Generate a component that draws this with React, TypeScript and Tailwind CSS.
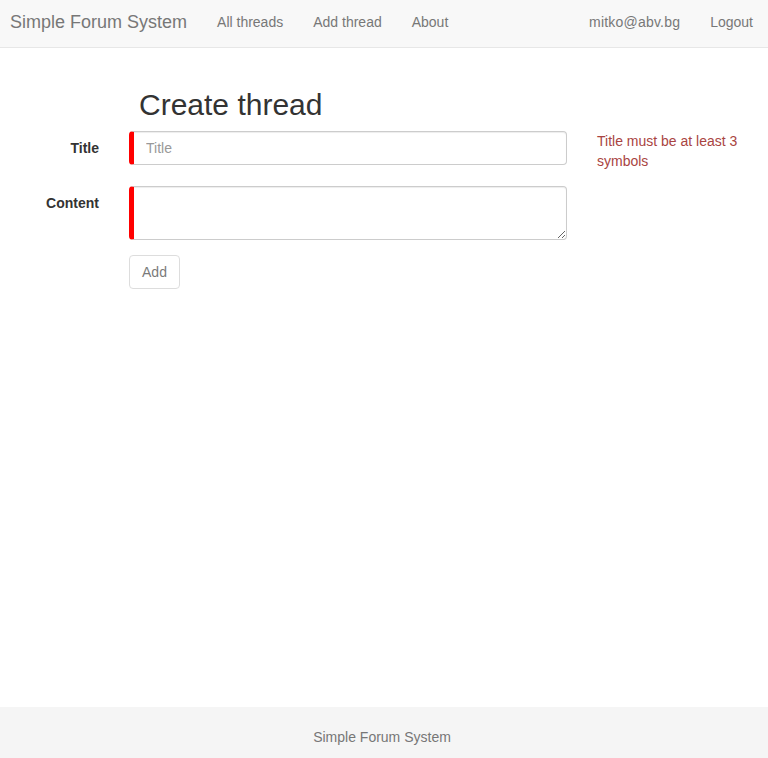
import React from "react";

const NAV_LINKS = ["All threads", "Add thread", "About"];

function Navbar() {
  return (
    <nav className="flex h-[48px] items-start border-b border-[#e7e7e7] bg-[#f8f8f8] text-[#777]">
      <a className="pl-[10px] pr-[15px] pt-[12px] text-[18px] leading-[20px]">
        Simple Forum System
      </a>
      <ul className="flex">
        {NAV_LINKS.map((link) => (
          <li key={link} className="px-[15px] pt-[12px] text-[14px] leading-[20px]">
            {link}
          </li>
        ))}
      </ul>
      <ul className="ml-auto flex">
        <li className="px-[15px] pt-[12px] text-[14px] leading-[20px] tracking-[0.2px]">mitko@abv.bg</li>
        <li className="px-[15px] pt-[12px] text-[14px] leading-[20px]">Logout</li>
      </ul>
    </nav>
  );
}

function FormRow({
  label,
  children,
  error,
}: {
  label: string;
  children: React.ReactNode;
  error?: string;
}) {
  return (
    <div className="mb-[15px] flex items-start">
      <label className="w-[99px] shrink-0 pt-[7px] text-right text-[14px] font-bold leading-[20px] text-[#333]">
        {label}
      </label>
      <div className="ml-[30px] w-[438px] shrink-0">{children}</div>
      {error && (
        <div className="ml-[30px] w-[156px] text-[14px] leading-[20px] text-[#a94442]">{error}</div>
      )}
    </div>
  );
}

export default function App() {
  return (
    <div
      className="flex h-[758px] flex-col bg-white text-[14px] text-[#333]"
      style={{ fontFamily: '"Liberation Sans", Arial, Helvetica, sans-serif' }}
    >
      <Navbar />

      <main className="flex-1">
        <h2 className="ml-[139px] mt-[40px] mb-[10px] text-[30px] font-normal leading-[33px] text-[#333]">
          Create thread
        </h2>

        <FormRow label="Title" error="Title must be at least 3 symbols">
          <input
            placeholder="Title"
            className="block h-[34px] w-full rounded-[4px] border border-l-[5px] border-[#ccc] border-l-[#f00] px-[12px] text-[14px] leading-[20px] text-[#555] shadow-[inset_0_1px_1px_rgba(0,0,0,0.075)] outline-none placeholder:text-[#999]"
          />
        </FormRow>

        <FormRow label="Content">
          <textarea className="block h-[54px] w-full rounded-[4px] border border-l-[5px] border-[#ccc] border-l-[#f00] px-[12px] py-[6px] text-[14px] leading-[20px] text-[#555] shadow-[inset_0_1px_1px_rgba(0,0,0,0.075)] outline-none" />
        </FormRow>

        <div className="ml-[129px]">
          <button
            disabled
            className="h-[34px] w-[51px] rounded-[4px] border border-[#ccc] bg-white text-[14px] leading-[20px] text-[#333] opacity-65"
          >
            Add
          </button>
        </div>
      </main>

      <footer className="h-[51px] bg-[#f5f5f5] pt-[20px] pr-[4px] text-center text-[14px] leading-[20px] text-[#777]">
        Simple Forum System
      </footer>
    </div>
  );
}
